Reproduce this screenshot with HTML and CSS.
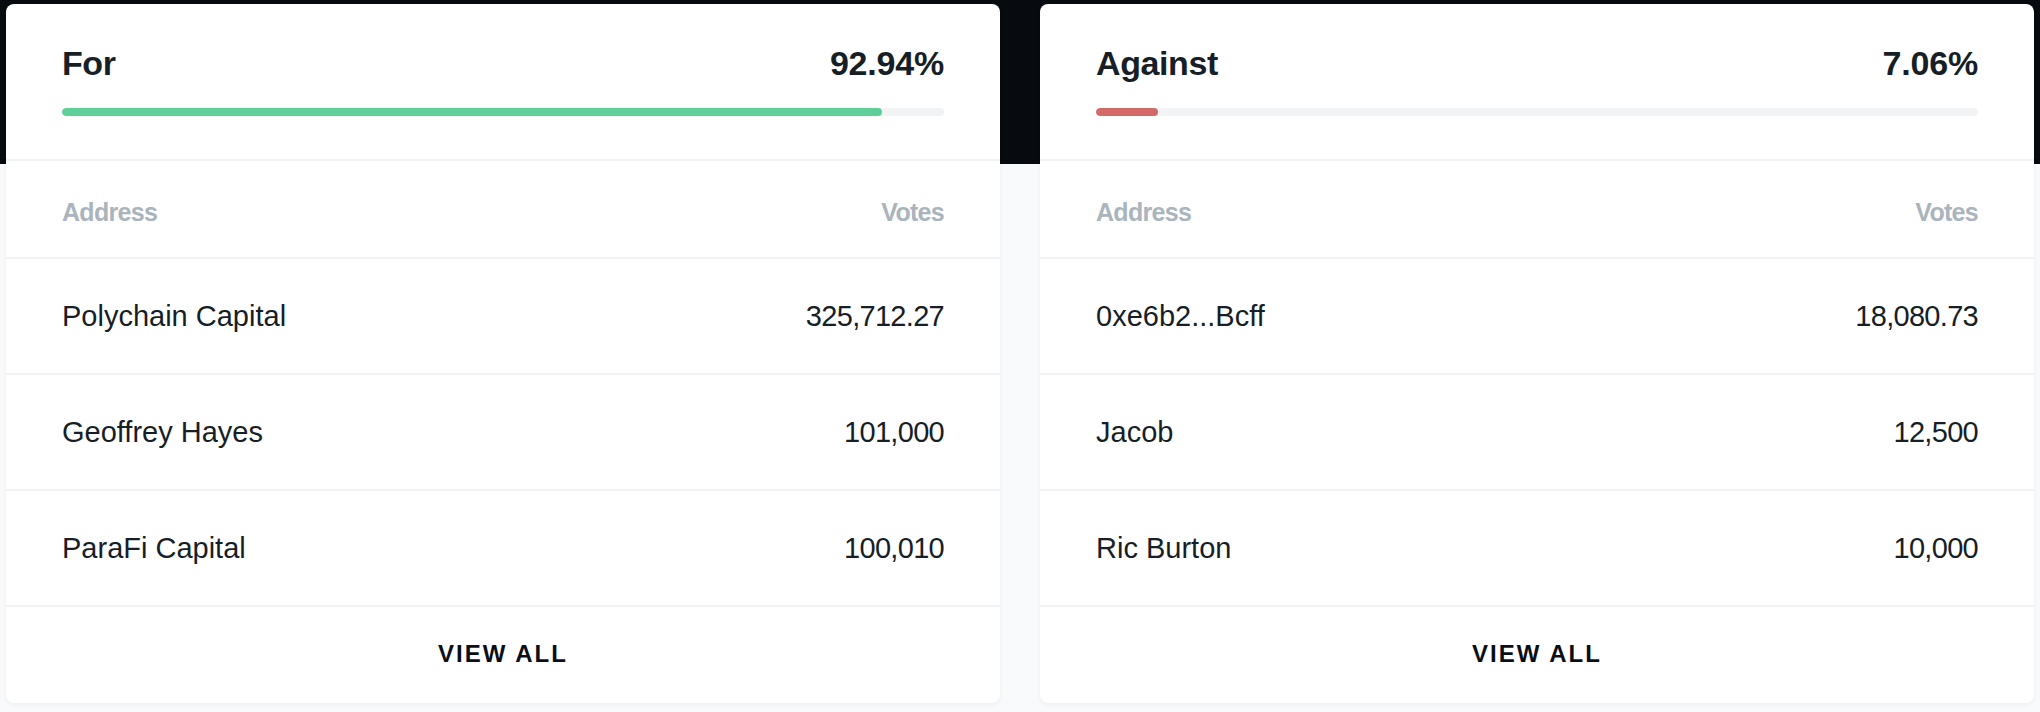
FILE: index.html
```html
<!DOCTYPE html>
<html lang="en">
<head>
<meta charset="utf-8">
<title>Votes</title>
<link rel="stylesheet" href="styles.css">
</head>
<body>
<main class="page">
  <section class="card">
    <div class="card-top">
      <div class="title-row">
        <span class="title">For</span>
        <span class="title pct">92.94%</span>
      </div>
      <div class="track"><div class="fill fill-for" style="width: 92.94%"></div></div>
    </div>
    <div class="thead">
      <span>Address</span>
      <span>Votes</span>
    </div>
    <div class="row"><span class="name">Polychain Capital</span><span class="votes">325,712.27</span></div>
    <div class="row"><span class="name">Geoffrey Hayes</span><span class="votes">101,000</span></div>
    <div class="row"><span class="name">ParaFi Capital</span><span class="votes">100,010</span></div>
    <div class="footer"><span class="view-all">VIEW ALL</span></div>
  </section>
  <section class="card">
    <div class="card-top">
      <div class="title-row">
        <span class="title">Against</span>
        <span class="title pct">7.06%</span>
      </div>
      <div class="track"><div class="fill fill-against" style="width: 7.06%"></div></div>
    </div>
    <div class="thead">
      <span>Address</span>
      <span>Votes</span>
    </div>
    <div class="row"><span class="name">0xe6b2...Bcff</span><span class="votes">18,080.73</span></div>
    <div class="row"><span class="name">Jacob</span><span class="votes">12,500</span></div>
    <div class="row"><span class="name">Ric Burton</span><span class="votes">10,000</span></div>
    <div class="footer"><span class="view-all">VIEW ALL</span></div>
  </section>
</main>
</body>
</html>
```
FILE: styles.css
```css
* { box-sizing: border-box; }

html, body {
  margin: 0;
  padding: 0;
}

body {
  font-family: "Liberation Sans", Arial, Helvetica, sans-serif;
  color: #1a2129;
  background: linear-gradient(#070a0e 0, #070a0e 164px, #f9fafb 164px, #f9fafb 100%);
  min-height: 712px;
}

.page {
  display: grid;
  grid-template-columns: 1fr 1fr;
  column-gap: 40px;
  padding: 4px 6px 9px 6px;
}

.card {
  background: #ffffff;
  border-radius: 8px;
  box-shadow: 0 2px 4px rgba(20, 30, 45, 0.05);
  display: flex;
  flex-direction: column;
  overflow: hidden;
}

.card-top {
  padding: 39px 56px 43px;
  border-bottom: 2px solid #f2f3f5;
}

.title-row {
  display: flex;
  justify-content: space-between;
  align-items: baseline;
}

.title {
  font-size: 34px;
  line-height: 40px;
  font-weight: 700;
  letter-spacing: -0.4px;
  color: #171e26;
}

.pct {
  letter-spacing: -0.2px;
}

.track {
  margin-top: 25px;
  height: 8px;
  border-radius: 4px;
  background: #f2f3f5;
  overflow: hidden;
}

.fill {
  height: 100%;
  border-radius: 4px;
}

.fill-for { background: #5ecf97; }
.fill-against { background: #d36a6a; }

.thead {
  display: flex;
  justify-content: space-between;
  padding: 36px 56px 30px;
  border-bottom: 2px solid #f2f3f5;
  font-size: 25px;
  line-height: 30px;
  font-weight: 700;
  letter-spacing: -0.7px;
  color: #aab4bd;
}

.row {
  display: flex;
  justify-content: space-between;
  padding: 37px 56px 37px;
  border-bottom: 2px solid #f2f3f5;
  font-size: 29px;
  line-height: 40px;
  color: #171e26;
}

.votes {
  letter-spacing: -0.7px;
}

.footer {
  display: flex;
  justify-content: center;
  padding: 32px 56px 34px;
}

.view-all {
  font-size: 24px;
  line-height: 30px;
  font-weight: 700;
  letter-spacing: 2px;
  color: #0b0f15;
}
```
